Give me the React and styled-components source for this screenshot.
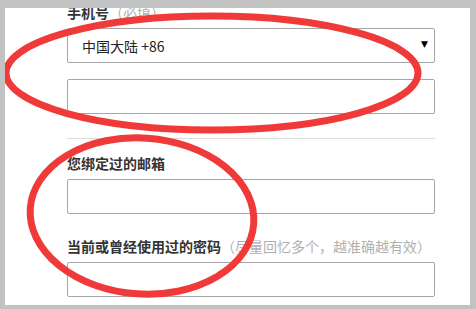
import React from "react";
import styled, { createGlobalStyle } from "styled-components";

const Global = createGlobalStyle`
  html, body { margin: 0; padding: 0; background: #c2c2c2; }
  body { font-family: "Noto Sans CJK SC", "Noto Sans", sans-serif; }
  * { box-sizing: border-box; }
`;

const Frame = styled.div`
  width: 476px;
  height: 309px;
  padding: 8px 6px 4px 5px;
  background: #c2c2c2;
`;

const Panel = styled.div`
  position: relative;
  width: 100%;
  height: 100%;
  background: #fff;
  overflow: hidden;
`;

const Form = styled.div`
  margin-top: -6px;
  padding-left: 62px;
  width: 430px;
  display: flex;
  flex-direction: column;
`;

const Label = styled.div`
  height: 20px;
  line-height: 20px;
  font-size: 14px;
  font-weight: 700;
  color: #333;
  white-space: nowrap;
  margin-top: ${(p) => p.$top || 0}px;
  margin-bottom: 6px;
`;

const Hint = styled.span`
  font-weight: 400;
  color: #b0b0b0;
`;

const Select = styled.div`
  height: 35px;
  width: 368px;
  border: 1px solid #a6a6a6;
  border-radius: 2px;
  display: flex;
  align-items: center;
  justify-content: space-between;
  padding: 0 6px 0 14px;
  font-size: 14px;
  color: #222;
  margin-bottom: 16px;
`;

const Arrow = styled.span`
  font-size: 9px;
  color: #000;
  margin-top: -4px;
  font-family: "DejaVu Sans", sans-serif;
`;

const Input = styled.div`
  height: 35px;
  width: 368px;
  border: 1px solid #a6a6a6;
  border-radius: 2px;
  background: #fff;
`;

const Divider = styled.div`
  width: 368px;
  height: 1px;
  background: #dcdcdc;
  margin-top: 24px;
`;

const Marks = styled.svg`
  position: absolute;
  left: 0;
  top: 0;
  pointer-events: none;
`;

export default function App() {
  return (
    <>
      <Global />
      <Frame>
        <Panel>
          <Form>
            <Label>
              手机号<Hint>（必填）</Hint>
            </Label>
            <Select>
              <span>中国大陆 +86</span>
              <Arrow>▼</Arrow>
            </Select>
            <Input />
            <Divider />
            <Label $top={14}>您绑定过的邮箱</Label>
            <Input />
            <Label $top={22}>
              当前或曾经使用过的密码<Hint>（尽量回忆多个，越准确越有效）</Hint>
            </Label>
            <Input />
          </Form>
          <Marks width="465" height="297" viewBox="0 0 465 297">
            <ellipse cx="207" cy="65" rx="206" ry="57" fill="none" stroke="#f03a3a" strokeWidth="7" />
            <ellipse cx="137" cy="208" rx="112" ry="78" fill="none" stroke="#f03a3a" strokeWidth="7" transform="rotate(4 137 208)" />
          </Marks>
        </Panel>
      </Frame>
    </>
  );
}
